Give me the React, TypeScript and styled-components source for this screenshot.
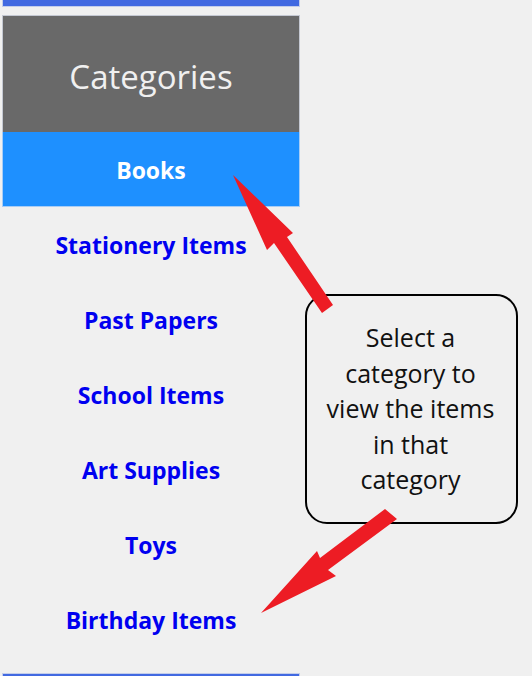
import React from "react";
import styled, { createGlobalStyle } from "styled-components";

const GlobalStyle = createGlobalStyle`
  html, body {
    margin: 0;
    padding: 0;
    background: #f0f0f0;
  }
  body {
    font-family: "Open Sans", "Noto Sans", "Liberation Sans", sans-serif;
  }
`;

const Page = styled.div`
  position: relative;
  width: 532px;
  height: 676px;
  overflow: hidden;
  display: flex;
  align-items: flex-start;
  background: #f0f0f0;
`;

const Sidebar = styled.nav`
  margin-left: 2px;
  width: 298px;
  display: flex;
  flex-direction: column;
`;

const Bar = styled.div`
  height: 7px;
  background: #4169e1;
  border: 1px solid #c3cdea;
  border-top: none;
  box-sizing: border-box;
`;

const BottomBar = styled(Bar)`
  margin-top: 16px;
  border-top: 1px solid #c3cdea;
  border-bottom: none;
`;

const Header = styled.div`
  margin-top: 8px;
  height: 117px;
  box-sizing: border-box;
  background: #696969;
  border: 1px solid #c4c8d2;
  border-bottom: none;
  display: flex;
  align-items: center;
  justify-content: center;
  color: #f0f0f0;
  font-size: 33px;
  padding-top: 4px;
`;

const List = styled.ul`
  list-style: none;
  margin: 0;
  padding: 0;
`;

const Item = styled.li<{ $active?: boolean }>`
  height: 75px;
  box-sizing: border-box;
  display: flex;
  align-items: center;
  justify-content: center;
  font-weight: 700;
  font-size: 23px;
  padding-top: ${(p) => (p.$active ? "1px" : "2px")};
  color: ${(p) => (p.$active ? "#ffffff" : "#0000f0")};
  background: ${(p) => (p.$active ? "#1e90ff" : "transparent")};
  border: 1px solid ${(p) => (p.$active ? "#a9cdf5" : "transparent")};
  border-top: none;
`;

const Annotation = styled.div`
  padding-top: 294px;
  margin-left: 5px;
`;

const Callout = styled.div`
  width: 213px;
  height: 230px;
  box-sizing: border-box;
  border: 2px solid #000;
  border-radius: 22px;
  display: flex;
  align-items: center;
  justify-content: center;
  text-align: center;
  font-size: 25px;
  line-height: 35.5px;
  color: #111;
  padding: 0 6px 0 4px;
`;

const Overlay = styled.svg`
  position: absolute;
  left: 0;
  top: 0;
  pointer-events: none;
`;

const categories = [
  "Books",
  "Stationery Items",
  "Past Papers",
  "School Items",
  "Art Supplies",
  "Toys",
  "Birthday Items",
];

export default function App() {
  return (
    <Page>
      <GlobalStyle />
      <Sidebar>
        <Bar />
        <Header>Categories</Header>
        <List>
          {categories.map((c, i) => (
            <Item key={c} $active={i === 0}>
              {c}
            </Item>
          ))}
        </List>
        <BottomBar />
      </Sidebar>
      <Annotation>
        <Callout>
          Select a<br />
          category to<br />
          view the items<br />
          in that<br />
          category
        </Callout>
      </Annotation>
      <Overlay width="532" height="676" viewBox="0 0 532 676">
        <polygon
          fill="#ed1c24"
          points="233,175 293,233 287,237 333,305 322,313 274,243 267,250"
        />
        <polygon
          fill="#ed1c24"
          points="261,613 317,551 320,558 385,509 397,519 328,570 336,576"
        />
      </Overlay>
    </Page>
  );
}
